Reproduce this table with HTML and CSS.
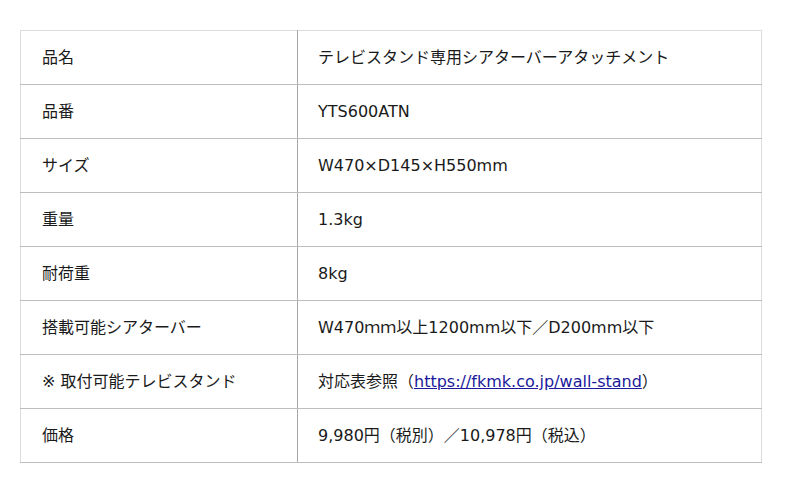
FILE: index.html
```html
<!DOCTYPE html>
<html lang="ja">
<head>
<meta charset="utf-8">
<link rel="stylesheet" href="styles.css">
</head>
<body>
<div class="wrap">
<table class="spec">
<tr><th>品名</th><td>テレビスタンド専用シアターバーアタッチメント</td></tr>
<tr><th>品番</th><td>YTS600ATN</td></tr>
<tr><th>サイズ</th><td>W470×D145×H550mm</td></tr>
<tr><th>重量</th><td>1.3kg</td></tr>
<tr><th>耐荷重</th><td>8kg</td></tr>
<tr><th>搭載可能シアターバー</th><td>W470ｍｍ以上1200mm以下／D200mm以下</td></tr>
<tr><th>※ 取付可能テレビスタンド</th><td>対応表参照（<a href="#">https://fkmk.co.jp/wall-stand</a>）</td></tr>
<tr><th>価格</th><td>9,980円（税別）／10,978円（税込）</td></tr>
</table>
</div>
</body>
</html>
```
FILE: styles.css
```css
html, body {
  margin: 0;
  padding: 0;
  background: #ffffff;
}
body {
  font-family: "DejaVu Sans", "Noto Sans CJK JP", sans-serif;
  font-size: 16px;
  color: #1a1a1a;
}
.wrap {
  padding: 30px 38px 0 20px;
}
.spec {
  width: 742px;
  border-collapse: collapse;
  border-top: 1px solid #dcdcdc;
  border-left: 1px solid #dcdcdc;
  border-right: 1px solid #dcdcdc;
}
.spec th,
.spec td {
  text-align: left;
  font-weight: normal;
  line-height: 23px;
  padding: 15px 20px;
  border-bottom: 1px solid #bdbdbd;
  white-space: nowrap;
}
.spec th {
  width: 235px;
  padding-left: 21px;
  border-right: 1px solid #a8a8a8;
}
.spec a {
  color: #1a1a9c;
  text-decoration: underline;
}
```
